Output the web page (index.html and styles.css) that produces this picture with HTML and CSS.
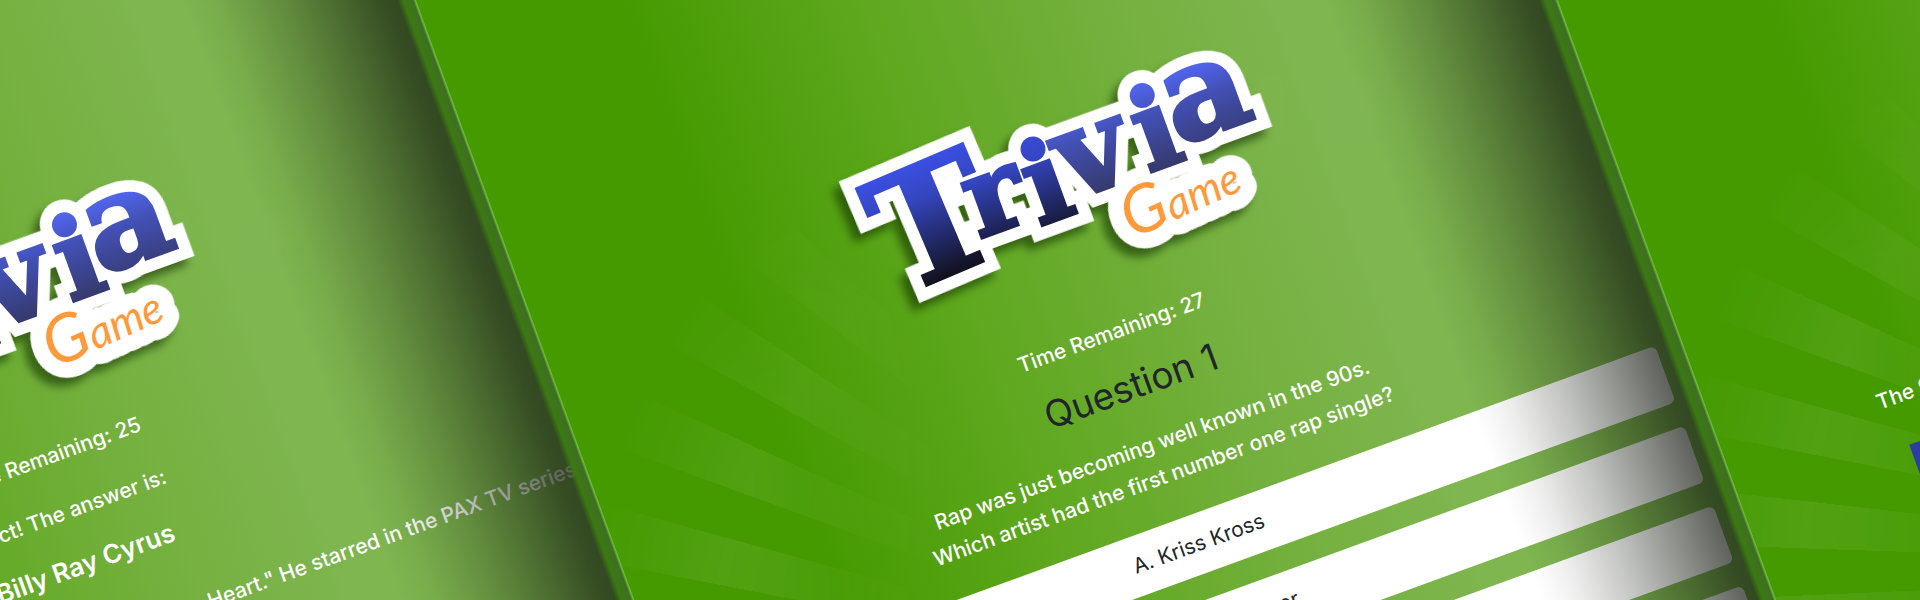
FILE: index.html
```html
<!DOCTYPE html>
<html lang="en">
<head>
<meta charset="utf-8">
<title>Trivia Game</title>
<link rel="stylesheet" href="styles.css">
</head>
<body>
<main class="banner">
  <svg class="defs" aria-hidden="true">
    <defs>
      <linearGradient id="ink" gradientUnits="userSpaceOnUse" x1="0" y1="465" x2="0" y2="590">
        <stop offset="0" stop-color="#3b50e6"/><stop offset=".3" stop-color="#3546c0"/><stop offset="1" stop-color="#100f18"/>
      </linearGradient>
      <linearGradient id="ink-light" gradientUnits="userSpaceOnUse" x1="0" y1="465" x2="0" y2="570">
        <stop offset="0" stop-color="#5368f4"/><stop offset=".35" stop-color="#4250b4"/><stop offset="1" stop-color="#33345c"/>
      </linearGradient>
      <g id="word">
        <text x="745" y="586" font-size="158" transform="rotate(-3 745 586)">T</text>
        <text x="838" y="559" font-size="110">r</text>
        <text x="899" y="568" font-size="112">i</text>
      </g>
      <g id="word-end">
        <text x="938" y="555" font-size="122">v</text>
        <text x="1020" y="555" font-size="112">i</text>
        <text x="1057" y="540" font-size="130">a</text>
      </g>
      <g id="sub">
        <text x="982" y="612" font-size="66" transform="rotate(-4 982 612)">G<tspan font-size="44">ame</tspan></text>
      </g>
      <g id="logo">
        <g class="logo-shadow">
          <g class="logo-edge"><use href="#word"/><use href="#word-end"/></g>
          <g class="logo-sub logo-sub-edge"><use href="#sub"/></g>
        </g>
        <g class="logo-word"><use href="#word" fill="url(#ink)" stroke="url(#ink)"/><use href="#word-end" fill="url(#ink-light)" stroke="url(#ink-light)"/></g>
        <g class="logo-sub"><use href="#sub"/></g>
      </g>
    </defs>
  </svg>
  <div class="stage">
    <section class="card card-answer">
      <svg class="logo" viewBox="711 440 440 200" role="img" aria-label="Trivia Game"><use href="#logo"/></svg>
      <p class="line timer">Time Remaining: 25</p>
      <p class="line verdict">Correct! The answer is:</p>
      <h2 class="answer">Billy Ray Cyrus</h2>
      <p class="line fact">Billy Ray Cyrus is best known for his hit country song "Achy Breaky Heart." He starred in the PAX TV series "Doc."</p>
    </section>
    <section class="card card-question">
      <svg class="logo" viewBox="711 440 440 200" role="img" aria-label="Trivia Game"><use href="#logo"/></svg>
      <p class="line timer">Time Remaining: 27</p>
      <h2 class="title">Question 1</h2>
      <p class="line">Rap was just becoming well known in the 90s.<br>Which artist had the first number one rap single?</p>
      <div class="choices">
        <button class="choice" type="button">A. Kriss Kross</button>
        <button class="choice" type="button">B. MC Hammer</button>
        <button class="choice" type="button">C. Vanilla Ice</button>
        <button class="choice" type="button">D. Run DMC</button>
      </div>
    </section>
    <section class="card card-start">
      <p class="line">The 90s Trivia Game</p>
      <button class="start" type="button">Start</button>
    </section>
  </div>
</main>
</body>
</html>
```

FILE: styles.css
```css
* { box-sizing: border-box; }

body {
  margin: 0;
  background: #459a00;
  font-family: Inter, "Liberation Sans", sans-serif;
  color: #fff;
}

.banner {
  position: relative;
  height: 100vh;
  overflow: hidden;
}

.defs { position: absolute; width: 0; height: 0; }

/* Three screens side by side, tilted as one sheet */
.stage {
  position: absolute;
  top: 0;
  left: 0;
  display: grid;
  grid-template-columns: repeat(3, 1073px);
  transform-origin: 0 0;
  transform: rotate(-20deg) translate(-682px, -260px);
}

.card {
  --burst-y: 1365px;
  position: relative;
  display: flex;
  flex-direction: column;
  align-items: center;
  height: 2000px;
  overflow: hidden;
  text-align: center;
  background:
    linear-gradient(90deg, #459a00 190px, #5fa81f 420px, #74b03e 640px, #7fb650 820px, #7fb650);
}

/* Sunburst */
.card::before {
  content: "";
  position: absolute;
  inset: 0;
  background: repeating-conic-gradient(from 4deg at 600px var(--burst-y), rgba(255, 255, 255, .07) 0 4.5deg, transparent 4.5deg 9deg);
  -webkit-mask-image: radial-gradient(circle at 600px var(--burst-y), transparent 350px, #000 600px, transparent 740px), linear-gradient(90deg, #000 150px, rgba(0, 0, 0, .1) 350px);
  mask-image: radial-gradient(circle at 600px var(--burst-y), transparent 350px, #000 600px, transparent 740px), linear-gradient(90deg, #000 150px, rgba(0, 0, 0, .1) 350px);
  -webkit-mask-composite: source-in;
  mask-composite: intersect;
}

/* Shade cast by the next screen, and that screen's edge */
.card::after {
  content: "";
  position: absolute;
  inset: 0 0 0 auto;
  width: 220px;
  background: linear-gradient(90deg, rgba(16, 22, 12, 0), rgba(16, 22, 12, .07) 35px, rgba(16, 22, 12, .25) 90px, rgba(16, 22, 12, .45) 140px, rgba(16, 22, 12, .66) 190px, rgba(16, 22, 12, .68) 202px, #3b7a12 208px, #3f6e24 217px, #6cb53c 219px);
}

.card > * { position: relative; }

.card-answer { --burst-y: 1118px; padding: 453px 0 0 54px; }
.card-question { padding: 700px 0 0 6px; }
.card-start { --burst-y: 1617px; align-items: flex-start; padding: 1264px 0 0 162px; }

.logo {
  width: 440px;
  height: 200px;
  flex: none;
  overflow: visible;
}

.card-answer .logo { margin-right: 16px; }

.logo-word, .logo-edge { font-family: "DejaVu Serif", serif; font-weight: 700; }
.logo-word { stroke-width: 4px; }
.logo-edge { fill: #fff; stroke: #fff; stroke-width: 28px; stroke-linejoin: miter; }
.logo-sub { font-family: Lato, sans-serif; font-style: italic; fill: #ff9a3c; }
.logo-sub-edge { fill: #fff; stroke: #fff; stroke-width: 32px; stroke-linejoin: round; }
.logo-shadow { filter: drop-shadow(-9px 6px 4px rgba(20, 50, 0, .6)); }

.line {
  margin: 0;
  font-size: 21px;
  font-weight: 500;
  line-height: 34px;
  white-space: nowrap;
}

.timer { margin-top: 36px; }
.card-answer .timer { padding-left: 12px; }

.title {
  margin: 17px 0 22px;
  font-size: 37px;
  line-height: 46px;
  font-weight: 400;
  color: #212529;
}

.verdict { margin-top: 24px; padding-right: 12px; }

.answer {
  margin: 21px 0 44px;
  padding-left: 12px;
  font-size: 26px;
  line-height: 34px;
  font-weight: 600;
}

.choices {
  display: grid;
  gap: 25px;
  align-self: stretch;
  margin: 28px 27px 0 47px;
}

.choice, .start {
  height: 60px;
  border: 0;
  border-radius: 6px;
  background: #fff;
  color: #212529;
  font: 21px/34px Inter, "Liberation Sans", sans-serif;
}

.start {
  width: 480px;
  margin: 33px 0 0 16px;
  border-radius: 0;
  background: #2b3fa0;
  color: #fff;
}
```
